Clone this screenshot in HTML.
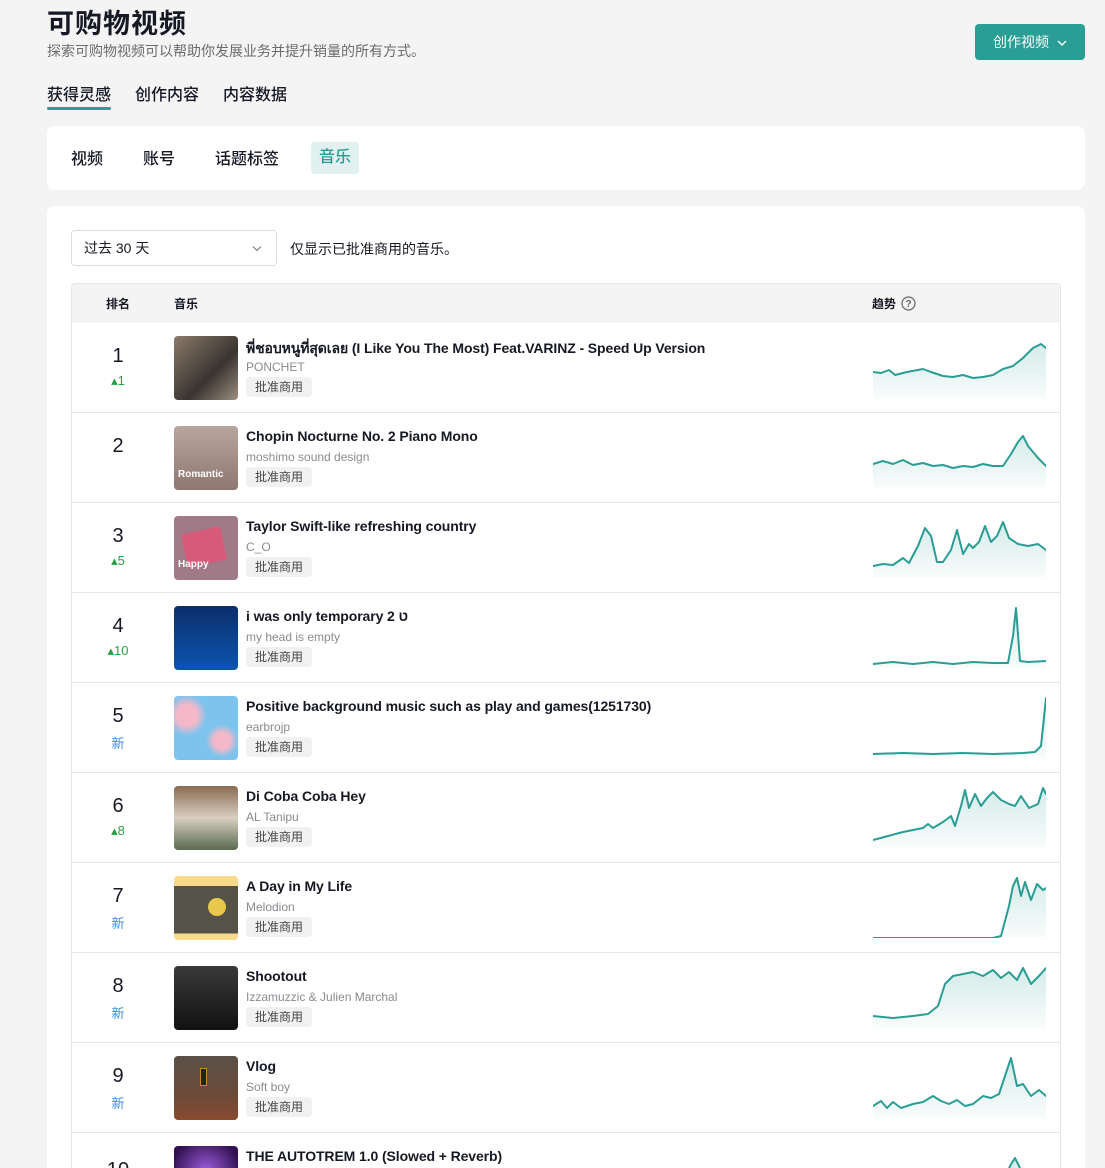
<!DOCTYPE html>
<html><head><meta charset="utf-8"><style>
*{margin:0;padding:0;box-sizing:border-box}
html,body{width:1105px;height:1168px;overflow:hidden}
body{background:#f4f4f4;font-family:"Liberation Sans","Noto Sans CJK SC",sans-serif;color:#161823;position:relative}
.a{position:absolute}
.h1{left:47px;top:2px;font-size:27px;font-weight:700;letter-spacing:1px}
.sub{left:47px;top:41px;font-size:14px;color:#6b6b6b}
.btn{left:975px;top:24px;width:110px;height:36px;background:#2a9d94;border-radius:4px;color:#fff;font-size:14px;line-height:36px;text-align:center}
.tab{top:81px;font-size:16px;font-weight:500}
.card{background:#fff;border-radius:8px}
.st{top:145px;font-size:16px;font-weight:500}
.row{position:absolute;left:71px;width:990px;height:90px;border-bottom:1px solid #e6e6e6;border-left:1px solid #e6e6e6;border-right:1px solid #e6e6e6;background:#fff}
.rk{position:absolute;left:0;width:92px;text-align:center;top:22px;font-size:20px}
.ch{position:absolute;left:0;width:92px;text-align:center;top:50px;font-size:13px}
.up{color:#25a244}.nw{color:#3a8ee6}
.th{position:absolute;left:102px;top:13px;width:64px;height:64px;border-radius:4px;overflow:hidden}
.tt{position:absolute;left:174px;top:15px;font-size:14px;font-weight:700;white-space:nowrap;letter-spacing:-0.1px}
.ar{position:absolute;left:174px;top:37px;font-size:12px;color:#8a8b91}
.bd{position:absolute;left:174px;top:54px;width:66px;height:20px;background:#f1f1f2;border-radius:4px;font-size:12px;color:#444;text-align:center;line-height:20px}
.sp{position:absolute;left:801px;top:13px}
polyline{stroke-linejoin:round;stroke-linecap:round}
</style></head><body>
<div class="a h1">可购物视频</div>
<div class="a sub">探索可购物视频可以帮助你发展业务并提升销量的所有方式。</div>
<div class="a btn">创作视频 <svg width="10" height="8" viewBox="0 0 10 8" style="margin-left:4px"><path d="M1 2l4 4 4-4" stroke="#fff" stroke-width="1.4" fill="none"/></svg></div>
<div class="a tab" style="left:47px">获得灵感</div>
<div class="a" style="left:47px;top:107px;width:64px;height:3px;background:#2a9d94;border-radius:2px"></div>
<div class="a tab" style="left:135px">创作内容</div>
<div class="a tab" style="left:223px">内容数据</div>
<div class="a card" style="left:47px;top:126px;width:1038px;height:64px"></div>
<div class="a st" style="left:71px">视频</div>
<div class="a st" style="left:143px">账号</div>
<div class="a st" style="left:215px">话题标签</div>
<div class="a" style="left:311px;top:142px;width:48px;height:32px;background:#e1f1ef;border-radius:4px;color:#2a9d94;font-size:16px;font-weight:500;line-height:32px;text-align:center">音乐</div>
<div class="a card" style="left:47px;top:206px;width:1038px;height:980px"></div>
<div class="a" style="left:71px;top:230px;width:206px;height:36px;border:1px solid #ddd;border-radius:4px;font-size:14px;line-height:34px;padding-left:12px">过去 30 天<svg class="a" style="right:14px;top:14px" width="10" height="7" viewBox="0 0 10 7"><path d="M1 1.5l4 4 4-4" stroke="#888" stroke-width="1.2" fill="none"/></svg></div>
<div class="a" style="left:290px;top:239px;font-size:14px">仅显示已批准商用的音乐。</div>
<div class="a" style="left:71px;top:283px;width:990px;height:40px;background:#f4f4f4;border:1px solid #e6e6e6;border-bottom:none;border-radius:4px 4px 0 0;font-size:12px;font-weight:700">
<span class="a" style="left:34px;top:11px">排名</span><span class="a" style="left:102px;top:11px">音乐</span><span class="a" style="left:800px;top:11px">趋势</span>
<svg class="a" style="left:829px;top:12px" width="15" height="15" viewBox="0 0 15 15"><circle cx="7.5" cy="7.5" r="6.5" stroke="#666" stroke-width="1.2" fill="none"/><text x="7.5" y="11" font-size="10" text-anchor="middle" fill="#666" font-family="Liberation Sans">?</text></svg></div>
<svg width="0" height="0" style="position:absolute"><defs><linearGradient id="g" x1="0" y1="0" x2="0" y2="1"><stop offset="0" stop-color="#2a9d94" stop-opacity=".2"/><stop offset="1" stop-color="#2a9d94" stop-opacity=".03"/></linearGradient></defs></svg>

<div class="row" style="top:323px"><div class="rk">1</div><div class="ch up">▴1</div><div class="th" style="background:linear-gradient(135deg,#8a7a6a,#3a3430 60%,#9b8f80)"></div><div class="tt">พี่ชอบหนูที่สุดเลย (I Like You The Most) Feat.VARINZ - Speed Up Version</div><div class="ar">PONCHET</div><div class="bd">批准商用</div>
<svg class="sp" width="173" height="62"><path d="M0,36 8,37 16,34 22,39 34,36 50,33 58,36 70,40 80,41 90,39 100,42 110,41 120,39 130,33 140,30 150,22 160,12 168,8 173,12 L173,62 L0,62Z" fill="url(#g)"/><polyline points="0,36 8,37 16,34 22,39 34,36 50,33 58,36 70,40 80,41 90,39 100,42 110,41 120,39 130,33 140,30 150,22 160,12 168,8 173,12" fill="none" stroke="#2a9d94" stroke-width="2"/></svg></div>

<div class="row" style="top:413px"><div class="rk">2</div><div class="th" style="background:linear-gradient(#b9a6a0,#8e7770)"><span class="a" style="left:4px;top:43px;color:#fff;font-size:10px;font-weight:700">Romantic</span></div><div class="tt">Chopin Nocturne No. 2 Piano Mono</div><div class="ar">moshimo sound design</div><div class="bd">批准商用</div>
<svg class="sp" width="173" height="62"><path d="M0,38 10,35 20,38 30,34 40,39 50,37 60,40 70,39 80,42 90,40 100,41 110,38 120,40 130,40 138,28 145,16 150,10 155,20 165,32 173,40 L173,62 L0,62Z" fill="url(#g)"/><polyline points="0,38 10,35 20,38 30,34 40,39 50,37 60,40 70,39 80,42 90,40 100,41 110,38 120,40 130,40 138,28 145,16 150,10 155,20 165,32 173,40" fill="none" stroke="#2a9d94" stroke-width="2"/></svg></div>

<div class="row" style="top:503px"><div class="rk">3</div><div class="ch up">▴5</div><div class="th" style="background:#a07a86"><div class="a" style="left:10px;top:14px;width:40px;height:34px;background:#d85a7a;transform:rotate(-12deg)"></div><span class="a" style="left:4px;top:43px;color:#fff;font-size:10px;font-weight:700">Happy</span></div><div class="tt">Taylor Swift-like refreshing country</div><div class="ar">C_O</div><div class="bd">批准商用</div>
<svg class="sp" width="173" height="62"><path d="M0,50 10,48 20,49 30,42 36,47 45,30 52,12 58,20 64,46 70,46 78,34 84,14 90,38 96,28 100,32 106,26 112,10 118,26 124,20 130,6 136,22 145,28 155,30 165,28 173,34 L173,62 L0,62Z" fill="url(#g)"/><polyline points="0,50 10,48 20,49 30,42 36,47 45,30 52,12 58,20 64,46 70,46 78,34 84,14 90,38 96,28 100,32 106,26 112,10 118,26 124,20 130,6 136,22 145,28 155,30 165,28 173,34" fill="none" stroke="#2a9d94" stroke-width="2"/></svg></div>

<div class="row" style="top:593px"><div class="rk">4</div><div class="ch up">▴10</div><div class="th" style="background:linear-gradient(#0c2e6a,#0b55b0)"></div><div class="tt">i was only temporary 2 ט</div><div class="ar">my head is empty</div><div class="bd">批准商用</div>
<svg class="sp" width="173" height="62"><path d="M0,58 20,56 40,58 60,56 80,58 100,56 120,57 135,57 140,30 143,2 147,55 155,56 173,55 L173,62 L0,62Z" fill="url(#g)"/><polyline points="0,58 20,56 40,58 60,56 80,58 100,56 120,57 135,57 140,30 143,2 147,55 155,56 173,55" fill="none" stroke="#2a9d94" stroke-width="2"/></svg></div>

<div class="row" style="top:683px"><div class="rk">5</div><div class="ch nw">新</div><div class="th" style="background:radial-gradient(circle at 20% 30%,#f5b8c8 15%,transparent 30%),radial-gradient(circle at 75% 70%,#f5b8c8 12%,transparent 25%),#7cc4ee"></div><div class="tt">Positive background music such as play and games(1251730)</div><div class="ar">earbrojp</div><div class="bd">批准商用</div>
<svg class="sp" width="173" height="62"><path d="M0,58 30,57 60,58 90,57 120,58 150,57 162,56 168,50 173,2 L173,62 L0,62Z" fill="url(#g)"/><polyline points="0,58 30,57 60,58 90,57 120,58 150,57 162,56 168,50 173,2" fill="none" stroke="#2a9d94" stroke-width="2"/></svg></div>

<div class="row" style="top:773px"><div class="rk">6</div><div class="ch up">▴8</div><div class="th" style="background:linear-gradient(#8a6a50,#d8cfc2 50%,#5a6a50)"></div><div class="tt">Di Coba Coba Hey</div><div class="ar">AL Tanipu</div><div class="bd">批准商用</div>
<svg class="sp" width="173" height="62"><path d="M0,54 15,50 30,46 40,44 50,42 55,38 60,42 70,36 78,30 82,40 88,20 92,4 96,22 102,8 108,20 114,12 120,6 128,14 136,18 142,20 148,10 156,22 165,18 170,2 173,8 L173,62 L0,62Z" fill="url(#g)"/><polyline points="0,54 15,50 30,46 40,44 50,42 55,38 60,42 70,36 78,30 82,40 88,20 92,4 96,22 102,8 108,20 114,12 120,6 128,14 136,18 142,20 148,10 156,22 165,18 170,2 173,8" fill="none" stroke="#2a9d94" stroke-width="2"/></svg></div>

<div class="row" style="top:863px"><div class="rk">7</div><div class="ch nw">新</div><div class="th" style="background:linear-gradient(#f9d98a 0 16%,#555248 16% 90%,#f9d98a 90%)"><div class="a" style="left:34px;top:22px;width:18px;height:18px;border-radius:50%;background:#e8c84a"></div></div><div class="tt">A Day in My Life</div><div class="ar">Melodion</div><div class="bd">批准商用</div>
<svg class="sp" width="173" height="62"><path d="M0,62 120,62 128,60 132,45 136,30 140,10 144,2 148,20 152,6 158,24 164,8 170,14 173,12 L173,62 L0,62Z" fill="url(#g)"/><polyline points="0,62 120,62 128,60 132,45 136,30 140,10 144,2 148,20 152,6 158,24 164,8 170,14 173,12" fill="none" stroke="#2a9d94" stroke-width="2"/></svg></div>

<div class="row" style="top:953px"><div class="rk">8</div><div class="ch nw">新</div><div class="th" style="background:linear-gradient(#3a3a3a,#111)"></div><div class="tt">Shootout</div><div class="ar">Izzamuzzic &amp; Julien Marchal</div><div class="bd">批准商用</div>
<svg class="sp" width="173" height="62"><path d="M0,50 20,52 40,50 55,48 65,40 72,18 80,10 90,8 100,6 110,10 120,4 128,12 136,6 144,14 150,2 158,18 166,10 173,2 L173,62 L0,62Z" fill="url(#g)"/><polyline points="0,50 20,52 40,50 55,48 65,40 72,18 80,10 90,8 100,6 110,10 120,4 128,12 136,6 144,14 150,2 158,18 166,10 173,2" fill="none" stroke="#2a9d94" stroke-width="2"/></svg></div>

<div class="row" style="top:1043px"><div class="rk">9</div><div class="ch nw">新</div><div class="th" style="background:linear-gradient(#5a5048,#6a4a38 60%,#8a4a30)"><div class="a" style="left:26px;top:12px;width:7px;height:18px;background:#222;border:1px solid #c88a30"></div></div><div class="tt">Vlog</div><div class="ar">Soft boy</div><div class="bd">批准商用</div>
<svg class="sp" width="173" height="62"><path d="M0,50 8,45 14,52 20,46 28,52 40,48 50,46 60,40 68,45 76,48 84,44 92,50 100,48 110,40 118,42 126,38 132,20 138,2 144,30 150,28 158,40 166,34 173,40 L173,62 L0,62Z" fill="url(#g)"/><polyline points="0,50 8,45 14,52 20,46 28,52 40,48 50,46 60,40 68,45 76,48 84,44 92,50 100,48 110,40 118,42 126,38 132,20 138,2 144,30 150,28 158,40 166,34 173,40" fill="none" stroke="#2a9d94" stroke-width="2"/></svg></div>

<div class="row" style="top:1133px"><div class="rk" style="top:26px">10</div><div class="th" style="background:radial-gradient(circle at 50% 40%,#a060e0,#301050 70%)"></div><div class="tt">THE AUTOTREM 1.0 (Slowed + Reverb)</div>
<svg class="sp" width="173" height="62"><path d="M0,62 120,60 130,40 137,20 142,12 148,24 155,50 173,58 L173,62 L0,62Z" fill="url(#g)"/><polyline points="0,62 120,60 130,40 137,20 142,12 148,24 155,50 173,58" fill="none" stroke="#2a9d94" stroke-width="2"/></svg></div>
</body></html>
